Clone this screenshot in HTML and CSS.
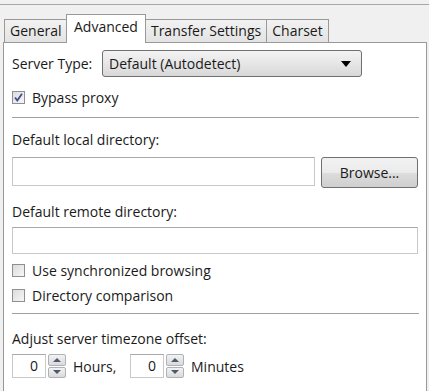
FILE: index.html
```html
<!DOCTYPE html>
<html lang="en">
<head>
  <meta charset="UTF-8" />
  <title>Advanced</title>
  <link rel="stylesheet" href="styles.css">
</head>
<body>
  <div class="topline"></div>

  <div class="tabs">
    <div class="tab">General</div>
    <div class="tab tab-active">Advanced</div>
    <div class="tab">Transfer Settings</div>
    <div class="tab">Charset</div>
  </div>

  <div class="panel">
    <div class="row server-row">
      <span class="server-label">Server Type:</span>
      <div class="select">
        <span>Default (Autodetect)</span>
        <span class="select-arrow"></span>
      </div>
    </div>

    <label class="check check-first">
      <span class="box">
        <svg width="11" height="11" viewBox="0 0 11 11"><path d="M2 5.5 L4.3 8.5 L9 1.8" fill="none" stroke="#3b4f8c" stroke-width="1.8"/></svg>
      </span>
      Bypass proxy
    </label>

    <div class="sep sep-first"></div>

    <div class="label label-local">Default local directory:</div>
    <div class="row dir-row">
      <div class="field field-local"></div>
      <div class="button">Browse...</div>
    </div>

    <div class="label label-remote">Default remote directory:</div>
    <div class="field field-remote"></div>

    <label class="check check-sync"><span class="box"></span>Use synchronized browsing</label>
    <label class="check check-cmp"><span class="box"></span>Directory comparison</label>

    <div class="sep sep-second"></div>

    <div class="label label-tz">Adjust server timezone offset:</div>
    <div class="row tz-row">
      <div class="spin-field">0</div>
      <div class="spin">
        <div class="spin-btn"><span class="tri-up"></span></div>
        <div class="spin-btn"><span class="tri-down"></span></div>
      </div>
      <span class="unit">Hours,</span>
      <div class="spin-field">0</div>
      <div class="spin">
        <div class="spin-btn"><span class="tri-up"></span></div>
        <div class="spin-btn"><span class="tri-down"></span></div>
      </div>
      <span class="unit">Minutes</span>
    </div>
  </div>
</body>
</html>
```

FILE: styles.css
```css
*, *::before, *::after {
  box-sizing: border-box;
}

html, body {
  margin: 0;
  padding: 0;
  overflow: hidden;
}

body {
  font-family: "Open Sans", "Noto Sans", sans-serif;
  font-size: 14px;
  color: #1a1a1a;
  background: #f0f0f0;
  width: 429px;
  height: 391px;
}

.topline {
  height: 5px;
  border-bottom: 1px solid #a8a8a8;
}

.tabs {
  display: flex;
  align-items: flex-end;
  padding-left: 4px;
  margin-top: 9px;
  height: 28px;
  position: relative;
  z-index: 1;
}

.tab {
  height: 23px;
  line-height: 21px;
  padding: 0 5px;
  border: 1px solid #999;
  border-bottom: none;
  background: linear-gradient(#f2f2f2, #e3e3e3);
  margin-right: -1px;
  white-space: nowrap;
}

.tab-active {
  height: 29px;
  line-height: 24px;
  padding: 0 7px;
  background: #fff;
  margin-bottom: -1px;
  position: relative;
  z-index: 2;
}

.tab:first-child {
  width: 63px;
}

.panel {
  margin-left: 3px;
  width: 424px;
  height: 360px;
  border: 1px solid #999;
  background: #fff;
  padding: 7px 7px 0 8px;
}

.row {
  display: flex;
  align-items: center;
}

.server-row {
  height: 27px;
}

.server-label {
  width: 90px;
}

.select {
  width: 260px;
  height: 27px;
  border: 1px solid #707070;
  border-radius: 3px;
  background: linear-gradient(#f3f3f3, #e6e6e6 50%, #d8d8d8);
  display: flex;
  align-items: center;
  justify-content: space-between;
  padding: 0 6px 0 6px;
}

.select-arrow {
  width: 0;
  height: 0;
  border-left: 5px solid transparent;
  border-right: 5px solid transparent;
  border-top: 6px solid #000;
  margin-right: 4px;
}

.check {
  display: flex;
  align-items: center;
  height: 20px;
  gap: 7px;
}

.box {
  width: 13px;
  height: 13px;
  border: 1px solid #8e8f8f;
  background: linear-gradient(135deg, #dcdcdc, #f6f6f6);
  display: flex;
  align-items: center;
  justify-content: center;
}

.check-first {
  margin-top: 10px;
}

.check-sync {
  margin-top: 6px;
}

.check-cmp {
  margin-top: 5px;
}

.sep {
  height: 1px;
  background: #a0a0a0;
}

.sep-first {
  margin-top: 10px;
}

.sep-second {
  margin-top: 8px;
}

.label {
  height: 20px;
  line-height: 20px;
}

.label-local {
  margin-top: 12px;
}

.label-remote {
  margin-top: 14px;
}

.label-tz {
  margin-top: 15px;
}

.dir-row {
  margin-top: 7px;
  height: 31px;
  align-items: flex-start;
  gap: 6px;
}

.field {
  height: 29px;
  border: 1px solid #c8c8c8;
  border-top-color: #a8a8a8;
  background: #fff;
}

.field-local {
  width: 303px;
}

.field-remote {
  margin-top: 5px;
  height: 27px;
  width: 406px;
}

.button {
  width: 97px;
  height: 31px;
  border: 1px solid #707070;
  border-radius: 3px;
  background: linear-gradient(#f2f2f2, #ebebeb 50%, #dddddd 51%, #cfcfcf);
  display: flex;
  align-items: center;
  justify-content: center;
}

.tz-row {
  margin-top: 5px;
  height: 24px;
}

.spin-field {
  width: 34px;
  height: 24px;
  border: 1px solid #c8c8c8;
  border-top-color: #a8a8a8;
  text-align: right;
  padding-right: 7px;
  line-height: 22px;
}

.spin {
  margin-left: 2px;
  width: 18px;
  height: 24px;
  display: flex;
  flex-direction: column;
  gap: 1px;
}

.spin-btn {
  flex: 1;
  border: 1px solid #aeb2b8;
  border-radius: 2px;
  background: linear-gradient(#f2f2f2, #dadada);
  display: flex;
  align-items: center;
  justify-content: center;
}

.tri-up {
  border-left: 4px solid transparent;
  border-right: 4px solid transparent;
  border-bottom: 4px solid #4b5a6c;
}

.tri-down {
  border-left: 4px solid transparent;
  border-right: 4px solid transparent;
  border-top: 4px solid #4b5a6c;
}

.unit {
  margin-left: 7px;
}

.unit:nth-of-type(1) {
  width: 57px;
}
```
